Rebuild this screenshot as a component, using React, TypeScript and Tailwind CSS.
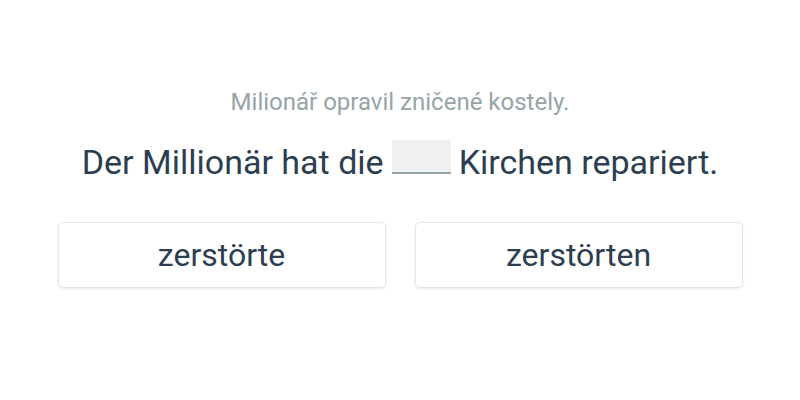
export default function App() {
  return (
    <div className="w-[800px] h-[400px] bg-white flex flex-col items-center" style={{ fontFamily: "Roboto, sans-serif" }}>
      <div className="mt-[88px] text-[24px] leading-[28px] text-[#95a5a6]">Milionář opravil zničené kostely.</div>
      <div className="mt-[26px] flex items-start text-[34px] leading-[40px] text-[#2c3e50]">
        <span>Der Millionär hat die</span>
        <span className="mx-[8px] mt-[-2px] inline-block w-[59px] h-[34px] bg-[#eef0f1] border-b-2 border-[#95a5a6]" />
        <span>Kirchen repariert.</span>
      </div>
      <div className="mt-[40px] flex gap-[29px]">
        <button className="w-[328px] h-[66px] rounded-[5px] border border-[#e3e5e6] bg-white shadow-[0_1px_3px_rgba(0,0,0,0.08)] text-[32px] text-[#2c3e50]">zerstörte</button>
        <button className="w-[328px] h-[66px] rounded-[5px] border border-[#e3e5e6] bg-white shadow-[0_1px_3px_rgba(0,0,0,0.08)] text-[32px] text-[#2c3e50]">zerstörten</button>
      </div>
    </div>
  );
}
